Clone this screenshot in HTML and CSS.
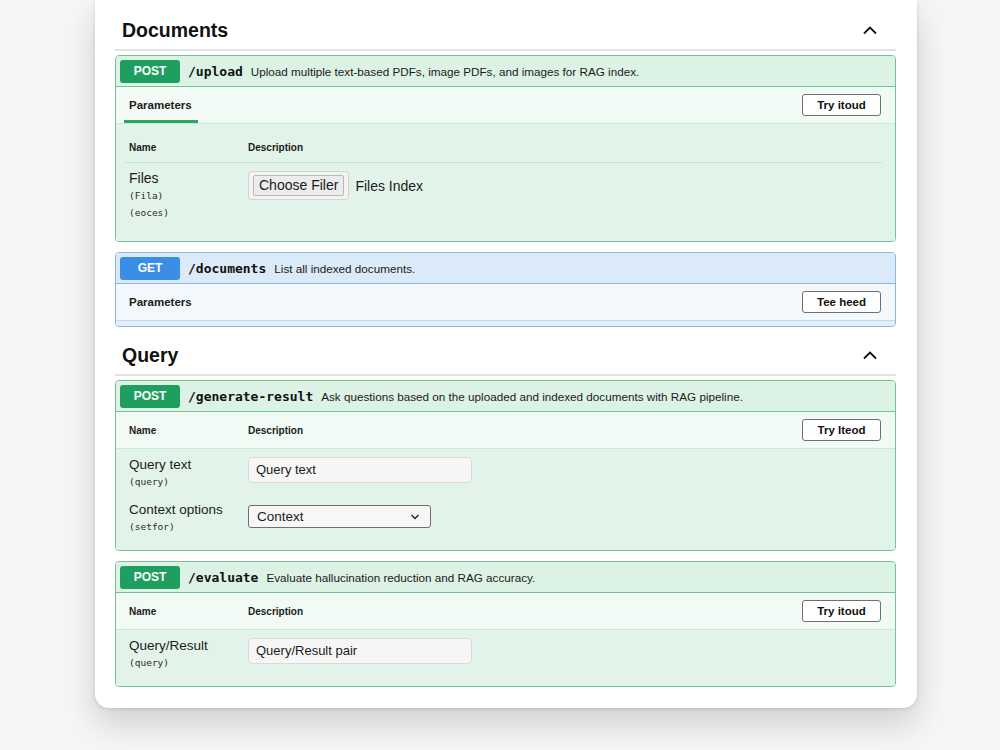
FILE: index.html
```html
<!DOCTYPE html>
<html lang="en">
<head>
    <meta charset="UTF-8">
    <meta name="viewport" content="width=device-width, initial-scale=1.0">
    <title>RAG API Docs</title>
    <link rel="stylesheet" href="styles.css">
</head>
<body>

    <div class="card">

        <!-- Documents -->
        <div class="tag-header tag-first">
            <h2>Documents</h2>
            <svg class="chevron" width="16" height="10" viewBox="0 0 16 10"><polyline points="2,8.5 8,2.5 14,8.5" fill="none" stroke="#111" stroke-width="1.8"/></svg>
        </div>

        <div class="op op-post">
            <div class="op-summary">
                <span class="method">POST</span>
                <span class="path">/upload</span>
                <span class="summary-text">Upload multiple text-based PDFs, image PDFs, and images for RAG index.</span>
            </div>
            <div class="op-bar">
                <div class="tab">Parameters</div>
                <button class="try-btn">Try itoud</button>
            </div>
            <div class="op-body upload-body">
                <div class="param-head">
                    <span class="col-name">Name</span>
                    <span class="col-desc">Description</span>
                </div>
                <div class="param-row">
                    <div class="col-name">
                        <div class="param-name">Files</div>
                        <div class="param-type">(Fila)</div>
                        <div class="param-type">(eoces)</div>
                    </div>
                    <div class="col-desc file-line">
                        <span class="file-box"><span class="file-btn">Choose Filer</span></span>
                        <span class="file-label">Files Index</span>
                    </div>
                </div>
            </div>
        </div>

        <div class="op op-get">
            <div class="op-summary">
                <span class="method">GET</span>
                <span class="path">/documents</span>
                <span class="summary-text">List all indexed documents.</span>
            </div>
            <div class="op-bar">
                <div class="bar-title">Parameters</div>
                <button class="try-btn">Tee heed</button>
            </div>
            <div class="op-strip"></div>
        </div>

        <!-- Query -->
        <div class="tag-header">
            <h2>Query</h2>
            <svg class="chevron" width="16" height="10" viewBox="0 0 16 10"><polyline points="2,8.5 8,2.5 14,8.5" fill="none" stroke="#111" stroke-width="1.8"/></svg>
        </div>

        <div class="op op-post">
            <div class="op-summary">
                <span class="method">POST</span>
                <span class="path">/generate-result</span>
                <span class="summary-text">Ask questions based on the uploaded and indexed documents with RAG pipeline.</span>
            </div>
            <div class="op-bar">
                <span class="col-name head-text">Name</span>
                <span class="col-desc head-text">Description</span>
                <button class="try-btn">Try Iteod</button>
            </div>
            <div class="op-body">
                <div class="param-row">
                    <div class="col-name">
                        <div class="param-name">Query text</div>
                        <div class="param-type">(query)</div>
                    </div>
                    <div class="col-desc">
                        <div class="text-input">Query text</div>
                    </div>
                </div>
                <div class="param-row">
                    <div class="col-name">
                        <div class="param-name">Context options</div>
                        <div class="param-type">(setfor)</div>
                    </div>
                    <div class="col-desc">
                        <div class="select">
                            <span>Context</span>
                            <svg width="10" height="6" viewBox="0 0 10 6"><polyline points="1.5,1 5,4.5 8.5,1" fill="none" stroke="#222" stroke-width="1.4"/></svg>
                        </div>
                    </div>
                </div>
            </div>
        </div>

        <div class="op op-post">
            <div class="op-summary">
                <span class="method">POST</span>
                <span class="path">/evaluate</span>
                <span class="summary-text">Evaluate hallucination reduction and RAG accuracy.</span>
            </div>
            <div class="op-bar">
                <span class="col-name head-text">Name</span>
                <span class="col-desc head-text">Description</span>
                <button class="try-btn">Try itoud</button>
            </div>
            <div class="op-body">
                <div class="param-row">
                    <div class="col-name">
                        <div class="param-name">Query/Result</div>
                        <div class="param-type">(query)</div>
                    </div>
                    <div class="col-desc">
                        <div class="text-input">Query/Result pair</div>
                    </div>
                </div>
            </div>
        </div>

    </div>

</body>
</html>
```

FILE: styles.css
```css
html {
    background-color: #f6f6f6;
}
body {
    margin: 0;
    padding-bottom: 60px;
    font-family: "Liberation Sans", Arial, sans-serif;
    color: #1b1b1b;
}
.card {
    margin-left: 95px;
    width: 822px;
    box-sizing: border-box;
    padding: 2px 21px 21px 20px;
    background-color: #fff;
    border-radius: 0 0 14px 14px;
    box-shadow: 0 16px 34px rgba(0, 0, 0, 0.16), 0 1px 4px rgba(0, 0, 0, 0.12);
}

/* section titles */
.tag-header {
    display: flex;
    align-items: center;
    justify-content: space-between;
    padding: 16px 18px 7px 7px;
    border-bottom: 2px solid #e2e2e2;
}
.tag-header h2 {
    margin: 0;
    font-size: 19.5px;
    line-height: 24px;
    font-weight: bold;
    color: #111;
}
.chevron {
    display: block;
}

/* operation blocks */
.op {
    margin-top: 4px;
    border: 1px solid #74c396;
    border-radius: 4px;
    overflow: hidden;
}
.op + .op {
    margin-top: 10px;
}
.op-summary {
    display: flex;
    align-items: center;
    height: 30px;
    padding: 0 4px;
    border-bottom: 1px solid #74c396;
    background-color: #dbf2e4;
}
.method {
    width: 60px;
    height: 23px;
    line-height: 23px;
    border-radius: 3px;
    background-color: #1f9f5f;
    color: #fff;
    font-size: 12px;
    font-weight: bold;
    text-align: center;
}
.path {
    margin-left: 8px;
    font-family: "DejaVu Sans Mono", monospace;
    font-size: 13px;
    font-weight: bold;
    color: #111;
}
.summary-text {
    margin-left: 8px;
    font-size: 11.7px;
    color: #1b1b1b;
}
.op-bar {
    display: flex;
    align-items: center;
    height: 36px;
    padding: 0 14px 0 13px;
    border-bottom: 1px solid #c9e8d5;
    background-color: #f1faf4;
}
.tab {
    align-self: flex-end;
    margin-left: -5px;
    padding: 10px 6px 8px 5px;
    font-size: 11.5px;
    line-height: 14px;
    font-weight: bold;
    border-bottom: 3px solid #2aa564;
}
.bar-title {
    font-size: 11.5px;
    font-weight: bold;
}
.head-text {
    font-size: 10px;
    font-weight: bold;
}
.try-btn {
    margin-left: auto;
    width: 79px;
    height: 22px;
    padding: 0;
    border: 1px solid #6f6f6f;
    border-radius: 3px;
    background-color: #fff;
    font-family: "Liberation Sans", Arial, sans-serif;
    font-size: 11.5px;
    font-weight: bold;
    color: #111;
}

/* parameters table */
.op-body {
    background-color: #e2f4e9;
    padding: 8px 13px 15px 13px;
}
.upload-body {
    padding: 0 13px 20px 9px;
}
.param-head {
    display: flex;
    padding: 17px 0 7px 4px;
    border-bottom: 1px solid #c7e3d2;
    font-size: 10px;
    line-height: 14px;
    font-weight: bold;
}
.upload-body .param-row {
    padding: 8px 0 0 4px;
}
.col-name {
    width: 118px;
    flex-shrink: 0;
}
.param-row {
    display: flex;
    align-items: flex-start;
}
.param-row + .param-row {
    margin-top: 12px;
}
.param-name {
    font-size: 13.5px;
    line-height: 16px;
}
.upload-body .param-name {
    font-size: 14px;
    line-height: 14px;
}
.param-type {
    font-family: "DejaVu Sans Mono", monospace;
    font-size: 9.5px;
    line-height: 17px;
    color: #2a2a2a;
}
.upload-body .param-name + .param-type {
    margin-top: 2px;
}
.col-desc {
    padding-left: 1px;
}
.file-line {
    display: flex;
    align-items: center;
}
.file-box {
    display: inline-flex;
    padding: 3px 4px;
    border: 1px solid #d4d4d4;
    border-radius: 3px;
    background-color: #f3f3f3;
}
.file-btn {
    padding: 0 5px;
    height: 19px;
    line-height: 19px;
    border: 1px solid #b8b8b8;
    border-radius: 2px;
    background-color: #ececec;
    font-size: 14px;
}
.file-label {
    margin-left: 6px;
    font-size: 14px;
}
.text-input {
    width: 224px;
    height: 26px;
    box-sizing: border-box;
    padding: 0 7px;
    line-height: 24px;
    border: 1px solid #dadada;
    border-radius: 4px;
    background-color: #f6f6f6;
    font-size: 13px;
}
.select {
    display: flex;
    align-items: center;
    justify-content: space-between;
    width: 183px;
    height: 23px;
    box-sizing: border-box;
    margin-top: 3px;
    padding: 0 10px 0 8px;
    border: 1px solid #6f6f6f;
    border-radius: 3px;
    background-color: #f7f7f7;
    font-size: 13.5px;
}

/* blue GET block */
.op-get {
    border-color: #8db6dc;
}
.op-get .op-summary {
    background-color: #dbeaf8;
    border-bottom-color: #8db6dc;
}
.op-get .method {
    background-color: #3a8ee6;
}
.op-get .op-bar {
    background-color: #f3f8fd;
    border-bottom-color: #c6dbee;
}
.op-strip {
    height: 5px;
    background-color: #e3eef8;
}
```
